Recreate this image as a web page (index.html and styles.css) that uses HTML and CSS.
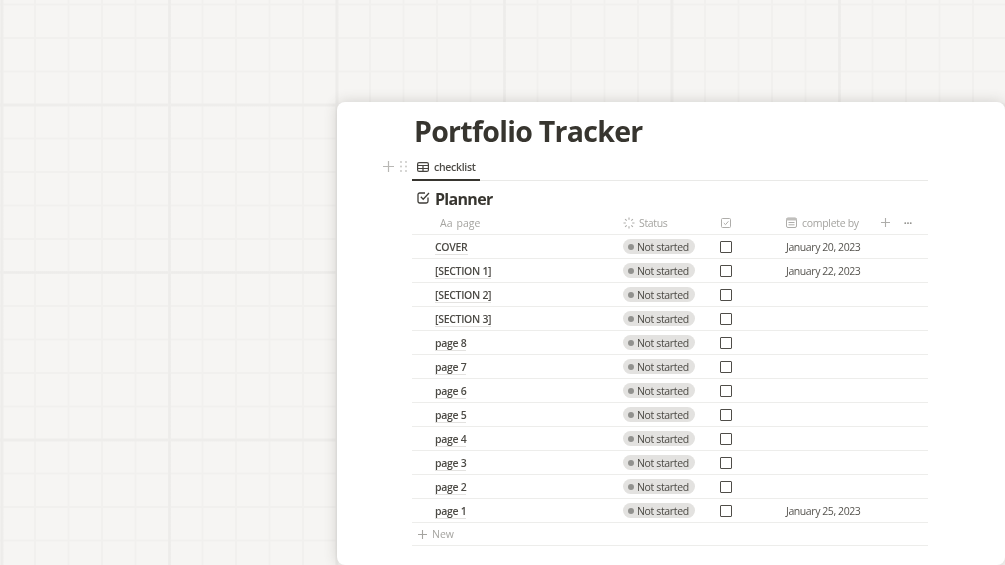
FILE: index.html
```html
<!DOCTYPE html>
<html lang="en">
<head>
<meta charset="utf-8">
<title>Portfolio Tracker</title>
<link rel="stylesheet" href="styles.css">
</head>
<body>
<main class="card">
  <h1 class="title">Portfolio Tracker</h1>
  <div class="tabs">
    <div class="handles">
      <svg class="handle-plus" width="11" height="11" viewBox="0 0 11 11"><path d="M5.5 0v11M0 5.5h11"/></svg>
      <svg class="handle-grip" width="7" height="11" viewBox="0 0 7 11"><g><circle cx="1" cy="1" r=".9"/><circle cx="6" cy="1" r=".9"/><circle cx="1" cy="5.500" r=".9"/><circle cx="6" cy="5.500" r=".9"/><circle cx="1" cy="10" r=".9"/><circle cx="6" cy="10" r=".9"/></g></svg>
    </div>
    <div class="tab">
      <svg width="12" height="10" viewBox="0 0 12 10"><rect x=".6" y=".6" width="10.800" height="8.800" rx="1.500"/><path d="M.6 3.500h10.800M.6 6.500h10.800M6 3.500v5.900"/></svg>
      <span>checklist</span>
    </div>
  </div>
  <h2 class="db-title">
    <svg width="13" height="13" viewBox="0 0 13 13"><path d="M11 6.500v3.800a1.700 1.700 0 0 1-1.700 1.700H2.700A1.700 1.700 0 0 1 1 10.300V3.700A1.700 1.700 0 0 1 2.700 2H8"/><path d="M3.800 5.800l2.400 2.400L12 2"/></svg>
    <span>Planner</span>
  </h2>
  <div class="table">
    <div class="row head">
      <div class="cell name-head"><span class="aa">Aa</span><span>page</span></div>
      <div class="cell status-head">
        <svg width="12" height="12" viewBox="0 0 12 12"><path d="M6 .5v2.300M6 9.200v2.300M.5 6h2.300M9.200 6h2.300M2.100 2.100l1.600 1.600M8.300 8.300l1.600 1.600M9.900 2.100L8.300 3.700M3.700 8.300L2.100 9.900"/></svg>
        <span>Status</span>
      </div>
      <div class="cell check-head">
        <svg width="10" height="10" viewBox="0 0 10 10"><rect x=".5" y=".5" width="9" height="9" rx="1"/><path d="M2.800 5l1.700 1.700 2.900-3.400"/></svg>
      </div>
      <div class="cell date-head">
        <svg width="11" height="11" viewBox="0 0 11 11"><rect x=".5" y="1" width="10" height="9.500" rx="1.500"/><path class="fill" d="M.5 1h10v2.500H.5z"/><path d="M2.500 5.500h6M2.500 7.800h6"/></svg>
        <span class="date-label">complete by</span>
        <svg class="head-plus" width="9" height="9" viewBox="0 0 9 9"><path d="M4.500 0v9M0 4.500h9"/></svg>
        <span class="dots">···</span>
      </div>
    </div>
    <div class="row"><div class="cell name"><span>COVER</span></div><div class="cell"><span class="pill"><i></i>Not started</span></div><div class="cell"><span class="box"></span></div><div class="cell date">January 20, 2023</div></div>
    <div class="row"><div class="cell name"><span>[SECTION 1]</span></div><div class="cell"><span class="pill"><i></i>Not started</span></div><div class="cell"><span class="box"></span></div><div class="cell date">January 22, 2023</div></div>
    <div class="row"><div class="cell name"><span>[SECTION 2]</span></div><div class="cell"><span class="pill"><i></i>Not started</span></div><div class="cell"><span class="box"></span></div><div class="cell date"></div></div>
    <div class="row"><div class="cell name"><span>[SECTION 3]</span></div><div class="cell"><span class="pill"><i></i>Not started</span></div><div class="cell"><span class="box"></span></div><div class="cell date"></div></div>
    <div class="row"><div class="cell name"><span>page 8</span></div><div class="cell"><span class="pill"><i></i>Not started</span></div><div class="cell"><span class="box"></span></div><div class="cell date"></div></div>
    <div class="row"><div class="cell name"><span>page 7</span></div><div class="cell"><span class="pill"><i></i>Not started</span></div><div class="cell"><span class="box"></span></div><div class="cell date"></div></div>
    <div class="row"><div class="cell name"><span>page 6</span></div><div class="cell"><span class="pill"><i></i>Not started</span></div><div class="cell"><span class="box"></span></div><div class="cell date"></div></div>
    <div class="row"><div class="cell name"><span>page 5</span></div><div class="cell"><span class="pill"><i></i>Not started</span></div><div class="cell"><span class="box"></span></div><div class="cell date"></div></div>
    <div class="row"><div class="cell name"><span>page 4</span></div><div class="cell"><span class="pill"><i></i>Not started</span></div><div class="cell"><span class="box"></span></div><div class="cell date"></div></div>
    <div class="row"><div class="cell name"><span>page 3</span></div><div class="cell"><span class="pill"><i></i>Not started</span></div><div class="cell"><span class="box"></span></div><div class="cell date"></div></div>
    <div class="row"><div class="cell name"><span>page 2</span></div><div class="cell"><span class="pill"><i></i>Not started</span></div><div class="cell"><span class="box"></span></div><div class="cell date"></div></div>
    <div class="row"><div class="cell name"><span>page 1</span></div><div class="cell"><span class="pill"><i></i>Not started</span></div><div class="cell"><span class="box"></span></div><div class="cell date">January 25, 2023</div></div>
    <div class="new">
      <svg width="9" height="9" viewBox="0 0 9 9"><path d="M4.500 0v9M0 4.500h9"/></svg>
      <span>New</span>
    </div>
  </div>
</main>
</body>
</html>
```
FILE: styles.css
```css
* { box-sizing: border-box; }
html, body { height: 100%; }
body {
  margin: 0;
  overflow: hidden;
  font-family: "Open Sans", "Noto Sans", sans-serif;
  color: #37352f;
  background-color: #f6f5f3;
  background-image:
    linear-gradient(90deg, #efeeec 0, #edecea 1.5px, #efeeec 3px, transparent 3.5px),
    linear-gradient(180deg, #efeeec 0, #edecea 1.5px, #efeeec 3px, transparent 3.5px),
    linear-gradient(90deg, #f1f0ee 1.5px, transparent 2px),
    linear-gradient(180deg, #f1f0ee 1.5px, transparent 2px);
  background-size: 167.5px 167.5px, 167.5px 167.5px, 33.5px 33.5px, 33.5px 33.5px;
  background-position: 0.5px 103.5px, 0.5px 103.5px, 0.5px 3.5px, 0.5px 3.5px;
  padding: 102px 0 0 337px;
}
.card {
  height: 463px;
  width: 668px;
  background: #fff;
  border-radius: 8px;
  box-shadow: 0 0 14px rgba(60, 55, 45, .2);
  padding: 0 77px 0 75px;
}
.card > * { filter: blur(.3px); }
.title {
  margin: 0 0 0 2px;
  height: 53px;
  font-size: 28.500px;
  letter-spacing: -.72px;
  line-height: 58px;
  font-weight: 700;
  color: #37352f;
}
.tabs {
  position: relative;
  height: 26px;
  border-bottom: 1px solid #e9e9e7;
}
.handles {
  position: absolute;
  left: -29px;
  top: 6px;
  display: flex;
  gap: 6px;
  align-items: center;
}
.handle-plus path { stroke: #b8b7b4; stroke-width: 1.200; fill: none; }
.handle-grip circle { fill: #c4c3c0; }
.tab {
  display: inline-flex;
  align-items: center;
  gap: 4px;
  height: 26px;
  width: 68px;
  padding-left: 5px;
  font-size: 10.500px;
  letter-spacing: -.3px;
  font-weight: 600;
  color: #4f4d48;
  border-bottom: 2px solid #37352f;
}
.tab svg { flex: none; }
.tab span { margin-left: 1px; }
.tab rect, .tab path { fill: none; stroke: #45433e; stroke-width: 1.200; }
.db-title {
  display: flex;
  align-items: center;
  margin: 0;
  height: 30px;
  padding: 6px 0 0 5px;
  gap: 5px;
  font-size: 16px;
  letter-spacing: -.7px;
  font-weight: 700;
  color: #37352f;
}
.db-title svg { margin-top: -3px; flex: none; }
.db-title path { fill: none; stroke: #3f3d38; stroke-width: 1.300; }
.row {
  display: grid;
  grid-template-columns: 211px 91px 66px 1fr;
  height: 24px;
  border-bottom: 1px solid #ededeb;
  align-items: center;
  font-size: 10.500px;
}
.cell { display: flex; align-items: center; min-width: 0; }
.head { color: #a5a4a0; font-size: 10.500px; }
.name-head { padding-left: 28px; gap: 4px; }
.aa { font-size: 10.500px; }
.status-head { gap: 4px; letter-spacing: -.35px; }
.status-head path { fill: none; stroke: #aeadaa; stroke-width: 1.100; }
.check-head { padding-left: 7px; }
.check-head rect, .check-head path { fill: none; stroke: #aeadaa; stroke-width: 1; }
.date-head { padding-left: 6px; gap: 5px; }
.date-label { letter-spacing: -.3px; }
.date-head rect, .date-head path { fill: none; stroke: #aeadaa; stroke-width: 1; }
.date-head .fill { fill: #c0bfbc; stroke: none; }
.head-plus { margin-left: 17px; }
.date-head .head-plus path { stroke: #aeadaa; stroke-width: 1.100; }
.dots { margin-left: 9px; font-weight: 700; color: #8f8e8a; letter-spacing: -.3px; }
.name { padding-left: 23px; padding-top: 2px; font-weight: 600; letter-spacing: -.3px; color: #4c4a45; }
.name span { border-bottom: 1px solid #e3e2e0; line-height: 13px; }
.pill {
  display: inline-flex;
  align-items: center;
  gap: 3px;
  height: 15px;
  width: 72px;
  padding-left: 5px;
  border-radius: 8px;
  background: #e3e2e0;
  color: #4a4843;
  letter-spacing: -.35px;
  white-space: nowrap;
}
.pill i { width: 6px; height: 6px; border-radius: 50%; background: #91918e; flex: none; }
.box {
  display: block;
  width: 12px;
  height: 12px;
  margin-left: 6px;
  border: 1.500px solid #4f4d48;
  border-radius: 1px;
}
.date { padding-left: 6px; color: #55534e; letter-spacing: -.42px; white-space: nowrap; }
.new {
  display: flex;
  align-items: center;
  gap: 5px;
  height: 23px;
  padding-left: 6px;
  border-bottom: 1px solid #ededeb;
  font-size: 10.500px;
  color: #a5a4a0;
}
.new path { stroke: #a5a4a0; stroke-width: 1.100; fill: none; }
```
